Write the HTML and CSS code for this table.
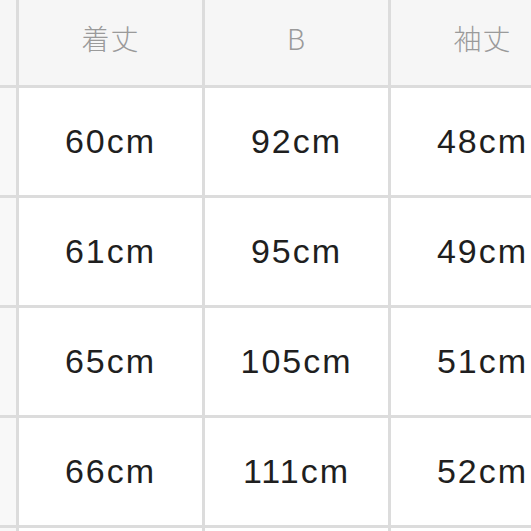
FILE: index.html
```html
<!DOCTYPE html>
<html lang="ja">
<head>
<meta charset="utf-8">
<title>サイズ表</title>
<link rel="stylesheet" href="styles.css">
</head>
<body>
<div class="viewport">
  <div class="table">
    <div class="cell head side"></div>
    <div class="cell head">着丈</div>
    <div class="cell head">B</div>
    <div class="cell head">袖丈</div>

    <div class="cell side"></div>
    <div class="cell">60cm</div>
    <div class="cell">92cm</div>
    <div class="cell">48cm</div>

    <div class="cell side"></div>
    <div class="cell">61cm</div>
    <div class="cell">95cm</div>
    <div class="cell">49cm</div>

    <div class="cell side"></div>
    <div class="cell">65cm</div>
    <div class="cell">105cm</div>
    <div class="cell">51cm</div>

    <div class="cell side"></div>
    <div class="cell">66cm</div>
    <div class="cell">111cm</div>
    <div class="cell">52cm</div>

    <div class="cell side"></div>
    <div class="cell"></div>
    <div class="cell"></div>
    <div class="cell"></div>
  </div>
</div>
</body>
</html>
```

FILE: styles.css
```css
html, body {
  margin: 0;
  padding: 0;
  background: #ffffff;
}
.viewport {
  width: 531px;
  height: 531px;
  overflow: hidden;
}
.table {
  display: grid;
  grid-template-columns: 16px 183px 183px 183px;
  grid-template-rows: 85px 107px 107px 107px 107px 40px;
  gap: 3px;
  background: #dcdcdc;
  width: max-content;
}
.cell {
  background: #ffffff;
  display: flex;
  align-items: center;
  justify-content: center;
  font-family: "Liberation Sans", Arial, "Noto Sans CJK JP", sans-serif;
  font-size: 34px;
  letter-spacing: 2px;
  color: #1f1f1f;
  white-space: nowrap;
}
.cell.side {
  background: #f8f8f8;
}
.cell.head {
  background: #f6f6f6;
  color: #9a9a9a;
  font-family: "Noto Sans CJK JP", "Liberation Sans", sans-serif;
  font-size: 28px;
  font-weight: 300;
  letter-spacing: 1px;
  padding-bottom: 9px;
}
```
